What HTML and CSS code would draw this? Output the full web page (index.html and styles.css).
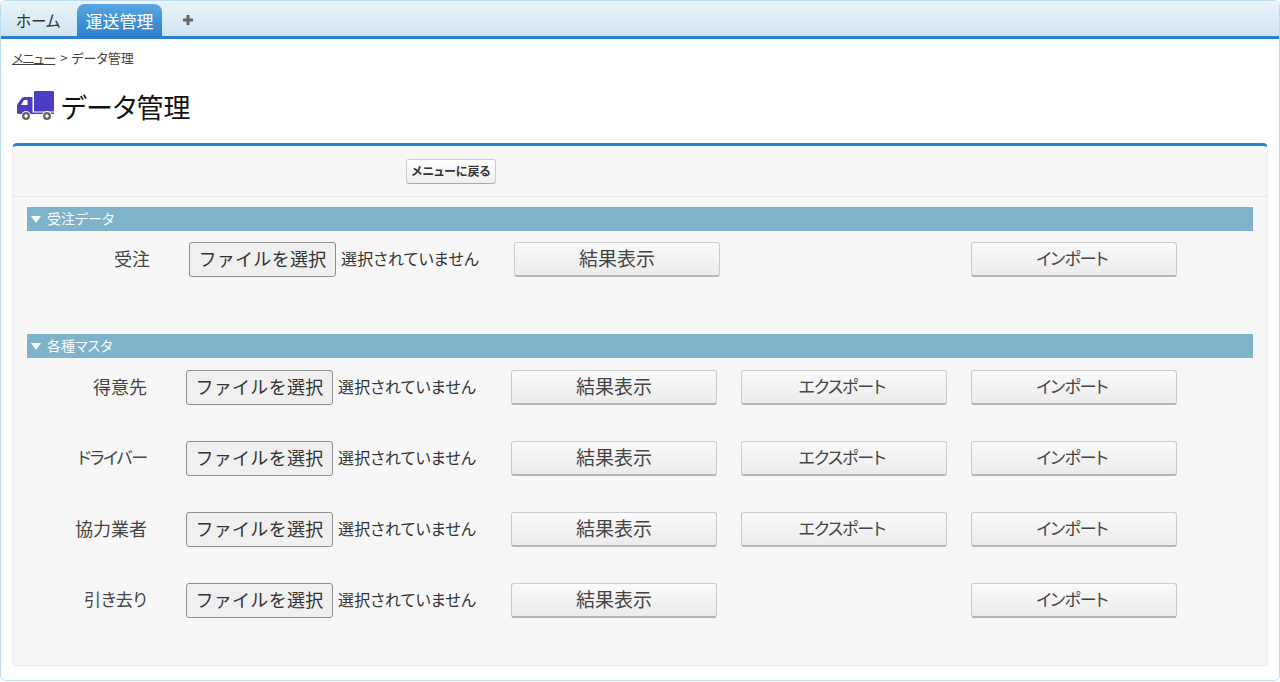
FILE: index.html
```html
<!DOCTYPE html>
<html lang="ja">
<head>
<meta charset="utf-8">
<title>データ管理</title>
<link rel="stylesheet" href="styles.css">
</head>
<body>
<div class="frame">
  <nav class="tabs">
    <a class="tab">ホーム</a>
    <a class="tab active">運送管理</a>
    <a class="tab-add"><svg viewBox="0 0 12 12" width="12" height="12" aria-hidden="true"><path d="M4.500 1H7.500V4.500H11V7.500H7.500V11H4.500V7.500H1V4.500H4.500Z" fill="#666"/></svg></a>
  </nav>
  <div class="crumbs"><a class="crumb-link">メニュー</a><span class="crumb-sep">&gt;</span><span>データ管理</span></div>
  <h1 class="title">
    <svg class="truck" viewBox="0 0 38 31" width="38" height="31" aria-hidden="true">
      <rect x="17" y="0" width="20" height="20.500" rx="1" fill="#4a3fc4"/>
      <path d="M15.500 6H7Q5.500 6 4.500 7.500L.5 13Q0 14 0 15V21.500Q0 23 1.500 23H37V21.500H15.500Z" fill="#4a3fc4"/>
      <path d="M7 9H10.500V14H4Z" fill="#fff"/>
      <circle cx="9" cy="25" r="5" fill="#fff"/><circle cx="9" cy="25" r="4" fill="#666"/><circle cx="9" cy="25" r="1.700" fill="#fff"/>
      <circle cx="30" cy="25" r="5" fill="#fff"/><circle cx="30" cy="25" r="4" fill="#666"/><circle cx="30" cy="25" r="1.700" fill="#fff"/>
    </svg>
    データ管理
  </h1>
  <main class="panel">
    <div class="toolbar"><button class="btn-small">メニューに戻る</button></div>

    <h2 class="section-head"><span class="arrow"></span>受注データ</h2>
    <div class="rows rows-first">
      <div class="row shifted">
        <span class="label">受注</span>
        <button class="file-btn">ファイルを選択</button><span class="file-text">選択されていません</span>
        <button class="btn btn-kanji">結果表示</button>
        <span class="btn-gap"></span>
        <button class="btn">インポート</button>
      </div>
    </div>

    <h2 class="section-head"><span class="arrow"></span>各種マスタ</h2>
    <div class="rows">
      <div class="row">
        <span class="label">得意先</span>
        <button class="file-btn">ファイルを選択</button><span class="file-text">選択されていません</span>
        <button class="btn btn-kanji">結果表示</button>
        <button class="btn">エクスポート</button>
        <button class="btn">インポート</button>
      </div>
      <div class="row">
        <span class="label label-kana">ドライバー</span>
        <button class="file-btn">ファイルを選択</button><span class="file-text">選択されていません</span>
        <button class="btn btn-kanji">結果表示</button>
        <button class="btn">エクスポート</button>
        <button class="btn">インポート</button>
      </div>
      <div class="row">
        <span class="label">協力業者</span>
        <button class="file-btn">ファイルを選択</button><span class="file-text">選択されていません</span>
        <button class="btn btn-kanji">結果表示</button>
        <button class="btn">エクスポート</button>
        <button class="btn">インポート</button>
      </div>
      <div class="row">
        <span class="label label-mixed">引き去り</span>
        <button class="file-btn">ファイルを選択</button><span class="file-text">選択されていません</span>
        <button class="btn btn-kanji">結果表示</button>
        <span class="btn-gap"></span>
        <button class="btn">インポート</button>
      </div>
    </div>
  </main>
</div>
</body>
</html>
```
FILE: styles.css
```css
* { box-sizing: border-box; }
html, body { margin: 0; padding: 0; height: 682px; overflow: hidden; background: #fff; }
body {
  font-family: "Noto Sans CJK JP", "Noto Sans", sans-serif;
  color: #333;
  font-feature-settings: "palt";
}
.frame {
  height: 681px;
  border: 1px solid #bcdcf0;
  border-radius: 6px;
  display: flex;
  flex-direction: column;
  overflow: hidden;
}
.tabs {
  height: 38px;
  flex: none;
  display: flex;
  align-items: flex-end;
  padding: 0 0 0 4px;
  background: linear-gradient(#eaf4f9, #cfe5ef);
  border-bottom: 3px solid #2b80cf;
}
.tab {
  width: 67px;
  height: 32px;
  line-height: 33px;
  padding: 0 0 0 11px;
  font-size: 15.5px;
  color: #333;
}
.tab.active {
  width: 85px;
  margin-left: 5px;
  padding: 0;
  text-align: center;
  color: #fff;
  font-size: 17px;
  background: linear-gradient(#5aa6e2, #2b80cf);
  border-radius: 8px 8px 0 0;
}
.tab-add {
  height: 32px;
  margin-left: 20px;
  display: flex;
  align-items: center;
}
.crumbs {
  flex: none;
  margin-top: 8px;
  height: 22px;
  line-height: 22px;
  padding-left: 11px;
  font-size: 13px;
  color: #444;
}
.crumb-link { text-decoration: underline; letter-spacing: -1px; }
.crumb-sep { margin: 0 4px 0 5px; }
.title {
  flex: none;
  margin: 17px 0 0;
  height: 40px;
  padding-left: 16px;
  display: flex;
  align-items: center;
  gap: 6px;
  font-size: 27px;
  font-weight: 400;
  color: #111;
}
.truck { flex: none; }
.panel {
  flex: none;
  margin: 17px 11px 0;
  height: 523px;
  background: #f7f7f7;
  border: 1px solid #ececec;
  border-top: 3px solid #2b80cf;
  border-radius: 5px;
}
.toolbar {
  height: 51px;
  padding: 13px 0 0 393px;
  border-bottom: 1px solid #e6e6e6;
}
.btn-small {
  display: block;
  width: 90px;
  height: 25px;
  padding: 0 0 2px;
  font: inherit;
  font-size: 12px;
  font-weight: 700;
  font-feature-settings: "palt";
  color: #333;
  background: linear-gradient(#fff, #eee);
  border: 1px solid #ccc;
  border-bottom-color: #aaa;
  border-radius: 3px;
}
.section-head {
  margin: 10px 14px 0 14px;
  height: 24px;
  padding: 0 0 3px 4px;
  background: #7fb3cc;
  color: #f8fbfc;
  font-size: 14px;
  font-weight: 400;
  display: flex;
  align-items: center;
}
.arrow {
  width: 0;
  height: 0;
  margin: 3px 6px 0 0;
  border-left: 5px solid transparent;
  border-right: 5px solid transparent;
  border-top: 7px solid #f8fbfc;
}
.rows { padding-top: 12px; display: flex; flex-direction: column; gap: 36px; }
.rows-first { height: 93px; padding-top: 11px; }
.row { display: flex; align-items: center; height: 35px; }
.label {
  width: 134px;
  padding-bottom: 4px;
  text-align: right;
  font-size: 18px;
  color: #444;
  margin-right: 39px;
}
.label-kana { font-size: 17px; letter-spacing: -1.2px; }
.label-mixed { font-size: 17px; }
.file-btn {
  width: 147px;
  height: 35px;
  padding: 0 0 4px;
  font: inherit;
  font-size: 18px;
  letter-spacing: .3px;
  font-feature-settings: normal;
  color: #333;
  background: #f0f0f0;
  border: 1px solid #8f8f8f;
  border-radius: 3px;
}
.file-text {
  width: 178px;
  padding: 0 0 3px 5px;
  font-size: 16px;
  letter-spacing: .2px;
  color: #333;
}
.btn {
  width: 206px;
  height: 35px;
  padding: 0 4px 3px 0;
  margin-right: 24px;
  font: inherit;
  font-size: 17px;
  letter-spacing: -1px;
  font-feature-settings: "palt";
  color: #444;
  background: linear-gradient(#fafafa, #ececec);
  border: 1px solid #ccc;
  border-bottom: 2px solid #b5b5b5;
  border-radius: 3px;
}
.btn-kanji { padding-right: 0; font-size: 19px; letter-spacing: 0; }
.btn-gap { width: 230px; flex: none; }
.shifted .label { width: 137px; }
.shifted .btn-gap { width: 227px; }
```
